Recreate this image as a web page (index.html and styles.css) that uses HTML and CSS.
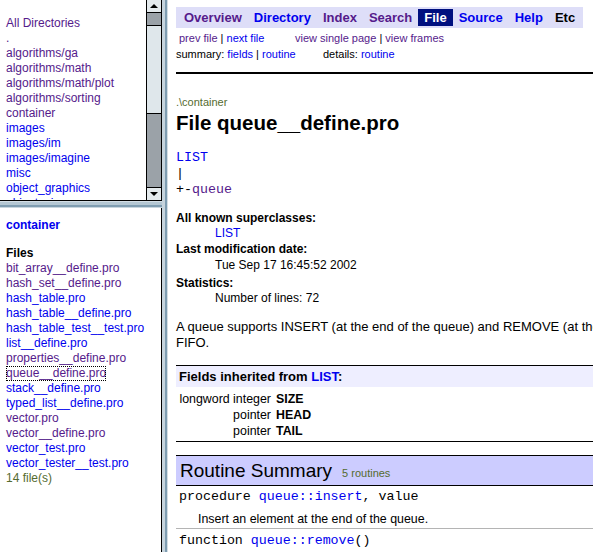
FILE: index.html
```html
<!DOCTYPE html>
<html>
<head>
<meta charset="utf-8">
<title>queue__define.pro</title>
<link rel="stylesheet" href="styles.css">
</head>
<body>
<div class="app">
  <div class="left">
    <div class="frame-top">
      <div class="dirs">
        <a class="v" href="#">All Directories</a>
        <a class="v" href="#">.</a>
        <a class="v" href="#">algorithms/ga</a>
        <a class="v" href="#">algorithms/math</a>
        <a class="v" href="#">algorithms/math/plot</a>
        <a class="v" href="#">algorithms/sorting</a>
        <a class="v" href="#">container</a>
        <a href="#">images</a>
        <a href="#">images/im</a>
        <a href="#">images/imagine</a>
        <a href="#">misc</a>
        <a href="#">object_graphics</a>
        <a href="#">object_view</a>
        <a href="#">objects</a>
      </div>
      <div class="scrollbar">
        <div class="sb-btn sb-up"><span class="tri-up"></span></div>
        <div class="sb-gap1"></div>
        <div class="sb-thumb"></div>
        <div class="sb-gap2"></div>
        <div class="sb-btn sb-down"><span class="tri-down"></span></div>
      </div>
    </div>
    <div class="hsplit"></div>
    <div class="frame-bottom">
      <a class="dirname" href="#">container</a>
      <div class="files-title">Files</div>
      <a class="v" href="#">bit_array__define.pro</a>
      <a class="v" href="#">hash_set__define.pro</a>
      <a href="#">hash_table.pro</a>
      <a href="#">hash_table__define.pro</a>
      <a href="#">hash_table_test__test.pro</a>
      <a href="#">list__define.pro</a>
      <a class="v" href="#">properties__define.pro</a>
      <a class="v focus" href="#">queue__define.pro</a>
      <a href="#">stack__define.pro</a>
      <a href="#">typed_list__define.pro</a>
      <a class="v" href="#">vector.pro</a>
      <a class="v" href="#">vector__define.pro</a>
      <a href="#">vector_test.pro</a>
      <a href="#">vector_tester__test.pro</a>
      <div class="count">14 file(s)</div>
    </div>
  </div>
  <div class="vsplit"></div>
  <div class="right">
    <div class="doc">
      <div class="nav">
        <a class="v" href="#">Overview</a><a href="#">Directory</a><a class="v" href="#">Index</a><a class="v" href="#">Search</a><span class="sel">File</span><a href="#">Source</a><a href="#">Help</a><span class="plain">Etc</span>
      </div>
      <div class="subnav">
        <div class="row">
          <span class="c1"><a class="v" href="#">prev file</a> | <a href="#">next file</a></span><span><a class="v" href="#">view single page</a> | <a class="v" href="#">view frames</a></span>
        </div>
        <div class="row">
          <span class="c2">summary: <a href="#">fields</a> | <a href="#">routine</a></span><span>details: <a href="#">routine</a></span>
        </div>
      </div>
      <div class="rule"></div>
      <div class="path">.\container</div>
      <h1 class="title">File queue__define.pro</h1>
      <div class="hier"><a href="#">LIST</a><br><span class="bar">|</span><br><span class="bar">+-</span><a class="v" href="#">queue</a></div>
      <dl class="info">
        <dt class="d1">All known superclasses:</dt>
        <dd class="d2"><a href="#">LIST</a></dd>
        <dt class="d3">Last modification date:</dt>
        <dd class="d4">Tue Sep 17 16:45:52 2002</dd>
        <dt class="d5">Statistics:</dt>
        <dd class="d6">Number of lines: 72</dd>
      </dl>
      <p class="desc">A queue supports INSERT (at the end of the queue) and REMOVE (at the front of the queue), i.e. it is a<br>FIFO.</p>
      <div class="fields">
        <div class="fields-head">Fields inherited from <a href="#">LIST</a>:</div>
        <table class="ftable">
          <tr><td class="ftype">longword integer</td><td class="fname">SIZE</td></tr>
          <tr><td class="ftype">pointer</td><td class="fname">HEAD</td></tr>
          <tr><td class="ftype">pointer</td><td class="fname">TAIL</td></tr>
        </table>
      </div>
      <div class="routines">
        <div class="routines-head"><span class="rt">Routine Summary</span><span class="rc">5 routines</span></div>
        <div class="routine">
          <div class="sig">procedure <a href="#">queue::insert</a>, value</div>
          <div class="rdesc">Insert an element at the end of the queue.</div>
        </div>
        <div class="routine">
          <div class="sig">function <a href="#">queue::remove</a>()</div>
        </div>
      </div>
    </div>
  </div>
</div>
</body>
</html>
```
FILE: styles.css
```css
html, body {
  margin: 0;
  padding: 0;
  background: #fff;
}
body {
  font-family: "Liberation Sans", Arial, sans-serif;
  font-size: 12px;
  color: #000;
  width: 593px;
  height: 552px;
  overflow: hidden;
}
a {
  color: #0000ee;
  text-decoration: none;
}
a.v {
  color: #551a8b;
}
.app {
  display: flex;
  height: 552px;
}

/* left column */
.left {
  width: 162px;
  flex: none;
  display: flex;
  flex-direction: column;
}
.frame-top {
  height: 200px;
  flex: none;
  display: flex;
  border-right: 1px solid #000;
  border-bottom: 1px solid #000;
}
.dirs {
  flex: 1;
  overflow: hidden;
  padding: 16px 0 0 6px;
  line-height: 15px;
  font-size: 12px;
  display: flex;
  flex-direction: column;
}
.dirs a {
  white-space: nowrap;
}
.scrollbar {
  width: 14px;
  flex: none;
  border-left: 1px solid #000;
  background: #9ba2a8;
  display: flex;
  flex-direction: column;
}
.sb-btn {
  height: 12px;
  flex: none;
  background: #e4eaed;
  display: flex;
  align-items: center;
  justify-content: center;
}
.sb-up {
  border-bottom: 1px solid #000;
}
.sb-down {
  border-top: 1px solid #000;
}
.sb-gap1 {
  height: 12px;
  flex: none;
}
.sb-thumb {
  height: 87px;
  flex: none;
  background: #dfe7eb;
  border-top: 1px solid #000;
  border-bottom: 1px solid #000;
}
.sb-gap2 {
  flex: 1;
}
.tri-up {
  width: 0;
  height: 0;
  border-left: 4px solid transparent;
  border-right: 4px solid transparent;
  border-bottom: 4px solid #000;
}
.tri-down {
  width: 0;
  height: 0;
  border-left: 4px solid transparent;
  border-right: 4px solid transparent;
  border-top: 4px solid #000;
}
.hsplit {
  height: 7px;
  flex: none;
  background: linear-gradient(to bottom, #d3dee5 0, #d3dee5 1px, #b4c7d3 1px, #b4c7d3 4px, #7f9db1 4px, #7f9db1 6px, #c9d6de 6px);
}
.frame-bottom {
  flex: 1;
  border-right: 1px solid #000;
  padding: 10px 0 0 6px;
  display: flex;
  flex-direction: column;
  align-items: flex-start;
  line-height: 15px;
  overflow: hidden;
}
.frame-bottom a {
  white-space: nowrap;
}
.frame-bottom a.dirname {
  font-weight: bold;
  color: #0000ee;
}
.files-title {
  font-weight: bold;
  margin-top: 13px;
}
.focus {
  outline: 1px dotted #000;
  outline-offset: -1px;
}
.count {
  color: #556b2f;
}
.vsplit {
  width: 6px;
  flex: none;
  background: linear-gradient(to right, #c6d4dd 0, #c6d4dd 3px, #7f9db1 3px, #7f9db1 5px, #d3dee5 5px);
}

/* right frame */
.right {
  flex: 1;
  overflow: hidden;
  padding: 7px 0 0 8px;
}
.doc {
  width: 560px;
}
.nav {
  display: inline-flex;
  background: #dedef8;
  padding: 2px;
}
.nav a, .nav span {
  font-size: 13px;
  font-weight: bold;
  line-height: 15px;
  padding: 1px 6px;
}
.nav .sel {
  background: #00107f;
  color: #fff;
}
.subnav {
  margin-top: 2px;
  font-size: 11px;
  line-height: 16px;
}
.row {
  display: flex;
  white-space: nowrap;
}
.c1 {
  width: 116px;
  padding-left: 3px;
}
.c2 {
  width: 147px;
}
.rule {
  height: 2px;
  background: #000;
  margin-top: 10px;
}
.path {
  margin-top: 22px;
  font-size: 11px;
  line-height: 13px;
  color: #556b2f;
}
.title {
  margin: 2px 0 0 0;
  font-size: 20.5px;
  line-height: 24px;
  font-weight: bold;
}
.hier {
  margin-top: 15px;
  font-family: "Liberation Mono", "Courier New", monospace;
  font-size: 13.3px;
  line-height: 16px;
}
.hier .bar {
  color: #000;
}
.info {
  margin: 12px 0 0 0;
}
.info dt {
  font-weight: bold;
}
.info dd {
  margin-left: 39px;
}
.d1 { line-height: 16px; }
.d2 { line-height: 15px; }
.d3 { line-height: 16px; }
.d4 { line-height: 16px; }
.d5 { line-height: 16px; margin-top: 2px; }
.d6 { line-height: 15px; }
.desc {
  margin: 13px 0 0 0;
  font-size: 13px;
  line-height: 16px;
  white-space: nowrap;
}
.fields {
  margin-top: 14px;
  border-top: 1px solid #000;
  border-bottom: 1px solid #000;
  padding-bottom: 2px;
}
.fields-head {
  background: #eeeeff;
  font-size: 13px;
  font-weight: bold;
  line-height: 21px;
  padding-left: 3px;
}
.ftable {
  border-collapse: collapse;
  margin: 4px 0 0 3px;
  font-size: 12.4px;
  line-height: 16px;
}
.ftable td {
  padding: 0;
  white-space: nowrap;
}
.ftype {
  text-align: right;
  width: 92px;
}
.fname {
  font-weight: bold;
  padding-left: 5px !important;
}
.routines {
  margin-top: 13px;
  border-top: 1px solid #000;
}
.routines-head {
  background: #ccccff;
  height: 30px;
  border-bottom: 1px solid #000;
  display: flex;
  align-items: baseline;
  padding: 2px 0 0 4px;
  box-sizing: border-box;
}
.rt {
  font-size: 19px;
  line-height: 26px;
}
.rc {
  font-size: 11px;
  color: #556b2f;
  margin-left: 10px;
}
.routine {
  padding: 3px 0 0 3px;
}
.routine + .routine {
  border-top: 1px solid #b4b4b4;
  padding-top: 4px;
}
.sig {
  font-family: "Liberation Mono", "Courier New", monospace;
  font-size: 13.3px;
  line-height: 16px;
  white-space: nowrap;
}
.rdesc {
  margin: 6px 0 0 19px;
  font-size: 12.4px;
  line-height: 16px;
  padding-bottom: 1px;
}
```
